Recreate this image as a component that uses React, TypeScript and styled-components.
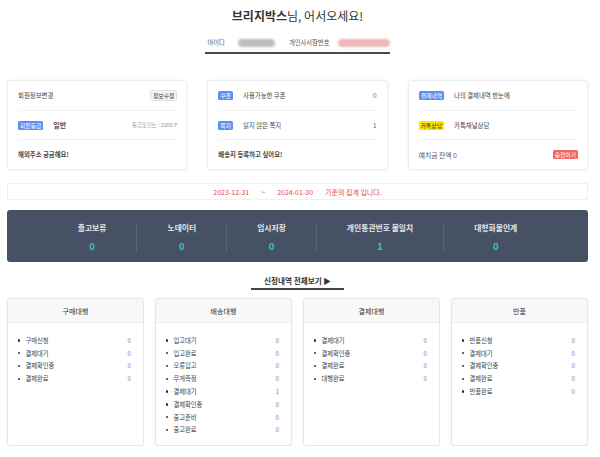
import styled, { createGlobalStyle, css } from "styled-components";

const GlobalStyle = createGlobalStyle`
  html, body {
    margin: 0;
    padding: 0;
    background: #fff;
  }
  body {
    font-family: "Noto Sans CJK KR", "Noto Sans", sans-serif;
    color: #444;
  }
`;

const Page = styled.div`
  width: 581px;
  margin-left: 7px;
  padding-top: 8px;
  display: flex;
  flex-direction: column;
  align-items: center;
`;

const Greeting = styled.h1`
  margin: 0;
  font-size: 12px;
  line-height: 16px;
  font-weight: 400;
  color: #333;
`;

const Name = styled.b`
  font-weight: 700;
`;

const InfoBar = styled.div`
  margin-top: 14px;
  display: flex;
  align-items: center;
  padding: 0 0 4px 3px;
  border-bottom: 2px solid #4a4a4a;
  font-size: 6.3px;
  line-height: 10px;
  color: #555;
`;

const Blur = styled.span<{ $w: number; $pink?: boolean }>`
  display: inline-block;
  width: ${(p) => p.$w}px;
  height: 8px;
  border-radius: 4px;
  background: ${(p) => (p.$pink ? "#eeb9b9" : "#bdbdbd")};
  filter: blur(1.2px);
  margin: 0 ${(p) => (p.$pink ? 0 : 14)}px 0 ${(p) => (p.$pink ? 9 : 13)}px;
`;

const CardRow = styled.div`
  margin-top: 26px;
  width: 100%;
  display: grid;
  grid-template-columns: repeat(3, 1fr);
  gap: 20px;
`;

const Card = styled.div`
  height: 90px;
  box-sizing: border-box;
  border: 1px solid #eee;
  border-radius: 3px;
  box-shadow: 0 0 3px rgba(0, 0, 0, 0.06);
  padding: 0 9px 0 10px;
  display: flex;
  flex-direction: column;
`;

const CardLine = styled.div`
  flex: 1;
  display: flex;
  align-items: center;
  gap: 10px;
  font-size: 6.4px;
  color: #444;
  & + & {
    border-top: 1px solid #f1f1f1;
  }
`;

const Strong = styled.span<{ $size?: number }>`
  font-weight: 700;
  font-size: ${(p) => p.$size ?? 6.4}px;
  color: #4a4a4a;
`;

const Spacer = styled.span`
  flex: 1;
`;

type Tone = "blue" | "yellow" | "red";

const tones: Record<Tone, ReturnType<typeof css>> = {
  blue: css`
    background: #5d8ff2;
    color: #fff;
  `,
  yellow: css`
    background: #ffe500;
    color: #333;
  `,
  red: css`
    background: #f2665c;
    color: #fff;
  `,
};

const Badge = styled.span<{ $tone: Tone }>`
  display: inline-block;
  font-size: 5.8px;
  line-height: 9px;
  padding: 0 2px;
  border-radius: 1.5px;
  ${(p) => tones[p.$tone]}
`;

const SmallButton = styled.span`
  font-size: 5.8px;
  line-height: 9px;
  padding: 0 2px;
  border: 1px solid #e2e2e2;
  background: #f4f4f4;
  border-radius: 1.5px;
  color: #333;
`;

const Muted = styled.span`
  font-size: 5.4px;
  color: #9a9a9a;
`;

const Count = styled.span`
  font-size: 7px;
  color: #5a6a9c;
  padding-right: 1px;
`;

const Plain = styled.span`
  font-size: 6.8px;
  color: #555;
`;

const DateBar = styled.div`
  margin-top: 13px;
  width: 100%;
  height: 17px;
  box-sizing: border-box;
  border: 1px solid #f0f0f0;
  display: flex;
  align-items: center;
  justify-content: center;
  gap: 12px;
  font-size: 7px;
  color: #e8483b;
`;

const StatBar = styled.div`
  margin-top: 10px;
  width: 100%;
  box-sizing: border-box;
  padding: 13px 0 10px;
  background: #465163;
  border-radius: 3px;
  display: flex;
  justify-content: center;
`;

const StatItem = styled.div`
  padding: 0 30px;
  display: flex;
  flex-direction: column;
  align-items: center;
  & + & {
    border-left: 1px solid #5b6577;
  }
`;

const StatLabel = styled.span`
  font-size: 7.8px;
  line-height: 10px;
  font-weight: 700;
  color: #e4e6ea;
`;

const StatValue = styled.span`
  margin-top: 7px;
  font-size: 9.5px;
  line-height: 12px;
  font-weight: 700;
  color: #35c6c9;
`;

const SectionLink = styled.div`
  margin-top: 14px;
  padding: 0 13px 2px;
  border-bottom: 2px solid #444;
  font-size: 7.6px;
  line-height: 10px;
  font-weight: 700;
  color: #333;
`;

const BoxGrid = styled.div`
  margin-top: 8px;
  width: 100%;
  display: grid;
  grid-template-columns: repeat(4, 1fr);
  gap: 11px;
`;

const Box = styled.div`
  height: 148px;
  box-sizing: border-box;
  border: 1px solid #e6e6e6;
  border-radius: 3px;
  box-shadow: 0 0 3px rgba(0, 0, 0, 0.05);
  overflow: hidden;
`;

const BoxHead = styled.div`
  height: 23px;
  background: #f8f8f8;
  border-bottom: 1px solid #ededed;
  display: flex;
  align-items: center;
  justify-content: center;
  font-size: 7px;
  color: #333;
`;

const BoxList = styled.ul`
  list-style: none;
  margin: 0;
  padding: 11px 12px 0 10px;
`;

const BoxItem = styled.li`
  display: flex;
  align-items: center;
  height: 12.8px;
  font-size: 6.3px;
  color: #444;
  &::before {
    content: "";
    width: 2.4px;
    height: 2.4px;
    border-radius: 50%;
    background: #333;
    margin-right: 5px;
  }
  span:last-child {
    margin-left: auto;
    color: #8a8a8a;
  }
`;

const stats = [
  ["출고보류", 0],
  ["노데이터", 0],
  ["임시저장", 0],
  ["개인통관번호 불일치", 1],
  ["대형화물인계", 0],
] as const;

const boxes: { title: string; items: [string, number][] }[] = [
  {
    title: "구매대행",
    items: [
      ["구매신청", 0],
      ["결제대기", 0],
      ["결제확인중", 0],
      ["결제완료", 0],
    ],
  },
  {
    title: "배송대행",
    items: [
      ["입고대기", 0],
      ["입고완료", 0],
      ["오류입고", 0],
      ["무게측정", 0],
      ["결제대기", 1],
      ["결제확인중", 0],
      ["출고준비", 0],
      ["출고완료", 0],
    ],
  },
  {
    title: "결제대행",
    items: [
      ["결제대기", 0],
      ["결제확인중", 0],
      ["결제완료", 0],
      ["대행완료", 0],
    ],
  },
  {
    title: "반품",
    items: [
      ["반품신청", 0],
      ["결제대기", 0],
      ["결제확인중", 0],
      ["결제완료", 0],
      ["반품완료", 0],
    ],
  },
];

export default function App() {
  return (
    <>
      <GlobalStyle />
      <Page>
        <Greeting>
          <Name>브리지박스</Name>님, 어서오세요!
        </Greeting>
        <InfoBar>
          <span>아이디</span>
          <Blur $w={37} />
          <span>개인사서함번호</span>
          <Blur $w={52} $pink />
        </InfoBar>

        <CardRow>
          <Card>
            <CardLine>
              <span>회원정보변경</span>
              <Spacer />
              <SmallButton>정보수정</SmallButton>
            </CardLine>
            <CardLine>
              <Badge $tone="blue">회원등급</Badge>
              <Strong $size={7}>일반</Strong>
              <Spacer />
              <Muted>등급포인트 : 2200 P</Muted>
            </CardLine>
            <CardLine>
              <Strong>해외주소 궁금해요!</Strong>
            </CardLine>
          </Card>
          <Card>
            <CardLine>
              <Badge $tone="blue">쿠폰</Badge>
              <span>사용가능한 쿠폰</span>
              <Spacer />
              <Count>0</Count>
            </CardLine>
            <CardLine>
              <Badge $tone="blue">쪽지</Badge>
              <span>읽지 않은 쪽지</span>
              <Spacer />
              <Count>1</Count>
            </CardLine>
            <CardLine>
              <Strong>배송지 등록하고 싶어요!</Strong>
            </CardLine>
          </Card>
          <Card>
            <CardLine>
              <Badge $tone="blue">결제내역</Badge>
              <span>나의 결제내역 한눈에</span>
            </CardLine>
            <CardLine>
              <Badge $tone="yellow">카톡상담</Badge>
              <span>카톡채널상담</span>
            </CardLine>
            <CardLine>
              <Plain>예치금 잔액 0</Plain>
              <Spacer />
              <Badge $tone="red">충전하기</Badge>
            </CardLine>
          </Card>
        </CardRow>

        <DateBar>
          <span>2023-12-31</span>
          <span>~</span>
          <span>2024-01-30</span>
          <span>기준의 집계 입니다.</span>
        </DateBar>

        <StatBar>
          {stats.map(([label, value]) => (
            <StatItem key={label}>
              <StatLabel>{label}</StatLabel>
              <StatValue>{value}</StatValue>
            </StatItem>
          ))}
        </StatBar>

        <SectionLink>신청내역 전체보기 ▶</SectionLink>

        <BoxGrid>
          {boxes.map((box) => (
            <Box key={box.title}>
              <BoxHead>{box.title}</BoxHead>
              <BoxList>
                {box.items.map(([name, n], i) => (
                  <BoxItem key={i}>
                    <span>{name}</span>
                    <span>{n}</span>
                  </BoxItem>
                ))}
              </BoxList>
            </Box>
          ))}
        </BoxGrid>
      </Page>
    </>
  );
}
